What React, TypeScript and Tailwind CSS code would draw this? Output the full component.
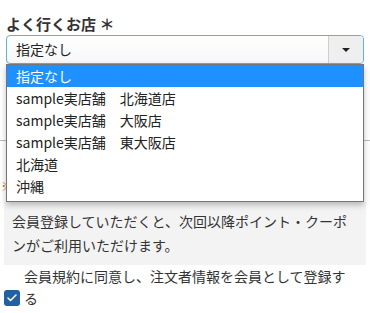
import { Check } from "lucide-react";

const stores = [
  "指定なし",
  "sample実店舗　北海道店",
  "sample実店舗　大阪店",
  "sample実店舗　東大阪店",
  "北海道",
  "沖縄",
];

function StoreListbox() {
  return (
    <div className="absolute left-[6px] top-[64px] w-[358px] border border-[#767676] bg-white pb-[4px] shadow-[0_3px_6px_rgba(0,0,0,0.25)]">
      {stores.map((s, i) => (
        <div
          key={s}
          className={
            i === 0
              ? "h-[22px] bg-[#1e90ff] pl-[9px] text-[14px] leading-[22px] text-white"
              : "h-[22px] pl-[9px] text-[14px] leading-[22px] text-[#222]"
          }
        >
          {s}
        </div>
      ))}
    </div>
  );
}

export default function App() {
  return (
    <div
      className="relative h-[313px] w-[370px] overflow-hidden bg-white text-[#333]"
      style={{ fontFamily: '"Noto Sans CJK JP", "Noto Sans", sans-serif' }}
    >
      <div className="px-[6px] pt-[14px]">
        <div className="text-[15px] font-bold leading-[20px] text-[#333]">よく行くお店 ＊</div>
        <div className="mt-[1px] flex h-[29px] overflow-hidden rounded-[4px] border border-[#5fb3cb] bg-gradient-to-b from-white to-[#f7f7f7]">
          <div className="flex flex-1 items-center pl-[9px] text-[14px] text-[#222]">指定なし</div>
          <div className="flex w-[35px] items-center justify-center border-l border-[#cfcfcf] bg-[#efefef]">
            <div className="h-0 w-0 border-x-[4px] border-t-[4px] border-x-transparent border-t-[#222]" />
          </div>
        </div>
      </div>

      {/* content hidden under the open list */}
      <div className="h-[138px] pt-[76px]">
        <div className="border-t border-[#bbb]" />
        <div className="mt-[36px] pl-[1px] text-[13px] leading-[18px] text-[#c47a2a]">※</div>
      </div>

      <div className="mx-[4px] bg-[#f3f3f3] px-[8px] pb-[8px] pt-[7px] text-[14px] leading-[24px] text-[#333]">
        会員登録していただくと、次回以降ポイント・クーポンがご利用いただけます。
      </div>

      <div className="flex items-end pl-[4px] pr-[18px]">
        <div className="mb-[3px] flex h-[16px] w-[16px] shrink-0 items-center justify-center rounded-[3px] bg-[#22609f]">
          <Check size={12} strokeWidth={3} className="text-white" />
        </div>
        <div className="pl-[4px] text-[14px] leading-[22px] text-[#333]">
          会員規約に同意し、注文者情報を会員として登録する
        </div>
      </div>
      <div className="pl-[27px] pt-[2px] text-[13px] leading-[18px] text-[#8a9bb0]">
        会員規約（かならずお読みください）
      </div>

      <StoreListbox />
    </div>
  );
}
